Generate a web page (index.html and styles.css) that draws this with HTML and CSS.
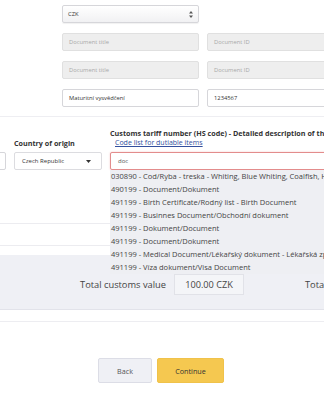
FILE: index.html
```html
<!DOCTYPE html>
<html lang="cs">
<head>
    <meta charset="UTF-8">
    <meta name="viewport" content="width=device-width, initial-scale=1.0">
    <title>Customs declaration</title>
    <link rel="stylesheet" href="styles.css">
</head>
<body>

<div class="page">
    <section class="docs">
        <div class="row">
            <div class="field select">
                <span>CZK</span>
                <svg class="updown" width="4" height="7" viewBox="0 0 4 7"><path d="M2 0 L4 2.6 L0 2.6 Z M2 7 L4 4.4 L0 4.4 Z" fill="#555"/></svg>
            </div>
        </div>
        <div class="row">
            <div class="field disabled">Document title</div>
            <div class="field disabled">Document ID</div>
        </div>
        <div class="row">
            <div class="field disabled">Document title</div>
            <div class="field disabled">Document ID</div>
        </div>
        <div class="row">
            <div class="field">Maturitní vysvědčení</div>
            <div class="field">1234567</div>
        </div>
    </section>

    <section class="items">
        <div class="item-head">
            <div class="col col-prev"></div>
            <div class="col col-country"><label>Country of origin</label></div>
            <div class="col col-hs">
                <label>Customs tariff number (HS code) - Detailed description of the goods</label>
                <a href="#" class="code-link">Code list for dutiable items</a>
            </div>
        </div>
        <div class="item-inputs">
            <div class="col col-prev"><div class="field"></div></div>
            <div class="col col-country">
                <div class="field select">
                    <span>Czech Republic</span>
                    <svg width="5" height="3" viewBox="0 0 5 3"><path d="M0 0 L5 0 L2.5 3 Z" fill="#333"/></svg>
                </div>
            </div>
            <div class="col col-hs">
                <div class="field invalid">doc</div>
                <ul class="suggestions">
                    <li>030890 - Cod/Ryba - treska - Whiting, Blue Whiting, Coalfish, Haddock</li>
                    <li>490199 - Document/Dokument</li>
                    <li>491199 - Birth Certificate/Rodný list - Birth Document</li>
                    <li>491199 - Businnes Document/Obchodní dokument</li>
                    <li>491199 - Dokument/Document</li>
                    <li>491199 - Document/Dokument</li>
                    <li>491199 - Medical Document/Lékařský dokument - Lékařská zpráva</li>
                    <li>491199 - Víza dokument/Visa Document</li>
                </ul>
            </div>
        </div>
        <div class="item-row first"></div>
        <div class="item-row"></div>
        <div class="item-row last"></div>
    </section>

    <section class="summary">
        <span class="sum-label">Total customs value</span>
        <span class="sum-box">100.00 CZK</span>
        <span class="sum-next">Total</span>
    </section>

    <div class="gap-band"></div>

    <div class="actions">
        <button class="btn back">Back</button>
        <button class="btn continue">Continue</button>
    </div>
</div>

</body>
</html>
```

FILE: styles.css
```css
body {
    margin: 0;
    font-family: "Open Sans", "DejaVu Sans", sans-serif;
    color: #333;
    background: #fff;
}
.page {
    width: 324px;
    height: 400px;
    overflow: hidden;
}

/* documents */
.docs {
    display: flex;
    flex-direction: column;
    gap: 10px;
    padding: 5px 0 9px 62px;
    border-bottom: 1px solid #eeeef2;
}
.row {
    display: flex;
    gap: 8px;
}
.field {
    box-sizing: border-box;
    flex: none;
    width: 137px;
    height: 18px;
    padding: 0 6px;
    display: flex;
    align-items: center;
    font-size: 5.8px;
    color: #333;
    background: #fff;
    border: 1px solid #d6d6da;
    border-radius: 2px;
    white-space: nowrap;
}
.field.disabled {
    background: #eeeeee;
    border-color: #e0e0e0;
    color: #a8a8a8;
}
.select {
    justify-content: space-between;
    background: linear-gradient(#ffffff, #f1f1f3);
    box-shadow: 0 1px 1px rgba(0, 0, 0, 0.06);
}
.docs .select {
    padding: 0 5px 0 5px;
}

/* item table */
.items {
    position: relative;
}
.item-head, .item-inputs {
    display: flex;
    gap: 8px;
    margin-left: -82px;
}
.item-head {
    align-items: flex-end;
    padding-top: 11px;
    height: 20px;
    margin-bottom: 4px;
}
.col {
    flex: none;
}
.col-prev {
    width: 88px;
}
.col-country {
    width: 88px;
}
.col-hs {
    width: 260px;
    position: relative;
}
.item-head label {
    display: block;
    font-size: 7.2px;
    font-weight: bold;
    line-height: 10px;
    color: #333;
    white-space: nowrap;
}
.code-link {
    display: block;
    margin-left: 5px;
    font-size: 7px;
    line-height: 10px;
    color: #33509e;
    white-space: nowrap;
}
.item-inputs .field {
    width: 100%;
    font-size: 6px;
}
.item-inputs .col-hs .field {
    width: 230px;
}
.col-country .select {
    padding: 0 10px 0 7px;
    background: #fff;
    box-shadow: none;
    border-color: #dcdce0;
}
.field.invalid {
    border-color: #e38c8c;
    box-shadow: 0 0 2px rgba(224, 90, 90, 0.35);
    padding-left: 7px;
    color: #555;
}
.suggestions {
    position: absolute;
    top: 18px;
    left: 0;
    z-index: 2;
    width: 240px;
    margin: 0;
    padding: 0;
    list-style: none;
    background: #eeeff3;
}
.suggestions li {
    height: 13px;
    line-height: 13px;
    padding-left: 1px;
    font-size: 7.5px;
    color: #444;
    white-space: nowrap;
}
.item-row {
    height: 21px;
    border-bottom: 1px solid #ececf0;
}
.item-row.first {
    height: 53px;
}
.item-row.last {
    height: 9px;
    border-bottom: none;
}

/* summary */
.summary {
    display: flex;
    align-items: center;
    height: 55px;
    padding-top: 4px;
    box-sizing: border-box;
    background: #eff0f5;
    border-bottom: 1px solid #e2e3ea;
}
.sum-label {
    flex: none;
    width: 166px;
    text-align: right;
    font-size: 9.3px;
    color: #444;
}
.sum-box {
    box-sizing: border-box;
    flex: none;
    width: 70px;
    height: 21px;
    margin-left: 8px;
    display: flex;
    align-items: center;
    justify-content: center;
    font-size: 9.2px;
    color: #444;
    background: #f4f5f8;
    border: 1px solid #e1e2e8;
}
.sum-next {
    flex: none;
    margin-left: 61px;
    font-size: 9.3px;
    color: #444;
    white-space: nowrap;
}

.gap-band {
    height: 11px;
    border-bottom: 1px solid #ededf1;
}

/* buttons */
.actions {
    display: flex;
    justify-content: center;
    gap: 5px;
    margin-top: 36px;
    padding-right: 2px;
}
.btn {
    height: 25px;
    padding: 0;
    font-family: inherit;
    font-size: 7.2px;
    border-radius: 2px;
    cursor: pointer;
}
.back {
    width: 54px;
    color: #555;
    background: #eff0f5;
    border: 1px solid #dcdde6;
}
.continue {
    width: 67px;
    color: #333;
    background: #f5c850;
    border: 1px solid #f0c24a;
}
```
